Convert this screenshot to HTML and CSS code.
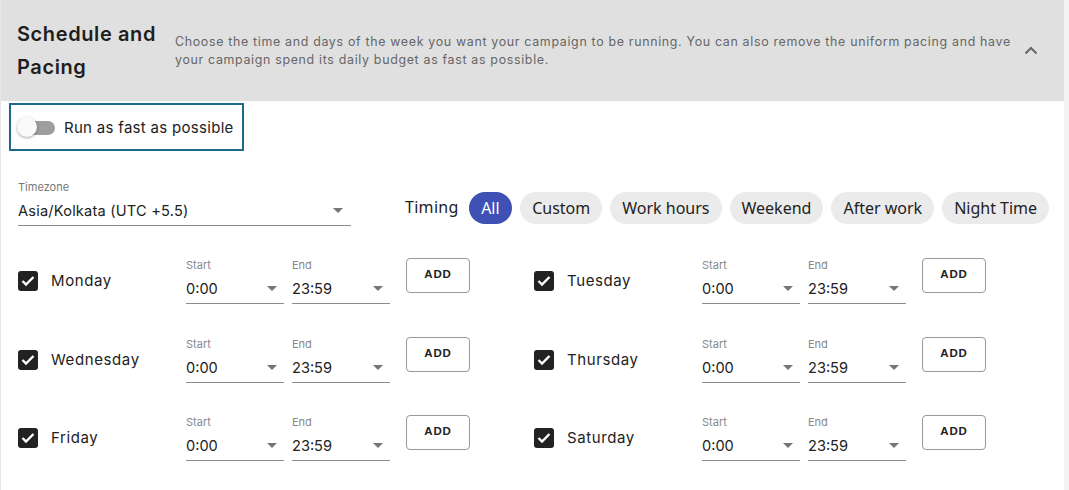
FILE: index.html
```html
<!DOCTYPE html>
<html>
<head>
<meta charset="utf-8">
<link rel="stylesheet" href="styles.css">
</head>
<body>
<div class="card">
  <div class="header">
    <div class="title">Schedule and Pacing</div>
    <div class="desc">Choose the time and days of the week you want your campaign to be running. You can also remove the uniform pacing and have your campaign spend its daily budget as fast as possible.</div>
    <svg class="chev" width="14" height="9" viewBox="0 0 14 9"><path d="M1.5 7.5 L7 2 L12.5 7.5" fill="none" stroke="#666" stroke-width="2"/></svg>
  </div>
  <div class="body">
    <div class="fastbox">
      <span class="switch"><span class="track"></span><span class="knob"></span></span>
      <span class="fastlabel">Run as fast as possible</span>
    </div>
    <div class="toprow">
      <div class="tz">
        <div class="tzlabel">Timezone</div>
        <div class="tzselect"><span>Asia/Kolkata (UTC +5.5)</span><i class="arrow"></i></div>
      </div>
      <div class="timing">
        <span class="timinglabel">Timing</span>
        <span class="chip active">All</span>
        <span class="chip">Custom</span>
        <span class="chip">Work hours</span>
        <span class="chip">Weekend</span>
        <span class="chip">After work</span>
        <span class="chip">Night Time</span>
      </div>
    </div>
    <div class="days">
      <div class="day">
        <span class="cb"><svg width="14" height="12" viewBox="0 0 14 12"><path d="M1.5 6 L5 9.5 L12.5 2" fill="none" stroke="#fff" stroke-width="2.4"/></svg></span>
        <span class="dayname">Monday</span>
        <div class="field"><div class="flabel">Start</div><div class="fval"><span>0:00</span><i class="arrow"></i></div></div>
        <div class="field"><div class="flabel">End</div><div class="fval"><span>23:59</span><i class="arrow"></i></div></div>
        <button class="add">ADD</button>
      </div>
      <div class="day">
        <span class="cb"><svg width="14" height="12" viewBox="0 0 14 12"><path d="M1.5 6 L5 9.5 L12.5 2" fill="none" stroke="#fff" stroke-width="2.4"/></svg></span>
        <span class="dayname">Tuesday</span>
        <div class="field"><div class="flabel">Start</div><div class="fval"><span>0:00</span><i class="arrow"></i></div></div>
        <div class="field"><div class="flabel">End</div><div class="fval"><span>23:59</span><i class="arrow"></i></div></div>
        <button class="add">ADD</button>
      </div>
      <div class="day">
        <span class="cb"><svg width="14" height="12" viewBox="0 0 14 12"><path d="M1.5 6 L5 9.5 L12.5 2" fill="none" stroke="#fff" stroke-width="2.4"/></svg></span>
        <span class="dayname">Wednesday</span>
        <div class="field"><div class="flabel">Start</div><div class="fval"><span>0:00</span><i class="arrow"></i></div></div>
        <div class="field"><div class="flabel">End</div><div class="fval"><span>23:59</span><i class="arrow"></i></div></div>
        <button class="add">ADD</button>
      </div>
      <div class="day">
        <span class="cb"><svg width="14" height="12" viewBox="0 0 14 12"><path d="M1.5 6 L5 9.5 L12.5 2" fill="none" stroke="#fff" stroke-width="2.4"/></svg></span>
        <span class="dayname">Thursday</span>
        <div class="field"><div class="flabel">Start</div><div class="fval"><span>0:00</span><i class="arrow"></i></div></div>
        <div class="field"><div class="flabel">End</div><div class="fval"><span>23:59</span><i class="arrow"></i></div></div>
        <button class="add">ADD</button>
      </div>
      <div class="day">
        <span class="cb"><svg width="14" height="12" viewBox="0 0 14 12"><path d="M1.5 6 L5 9.5 L12.5 2" fill="none" stroke="#fff" stroke-width="2.4"/></svg></span>
        <span class="dayname">Friday</span>
        <div class="field"><div class="flabel">Start</div><div class="fval"><span>0:00</span><i class="arrow"></i></div></div>
        <div class="field"><div class="flabel">End</div><div class="fval"><span>23:59</span><i class="arrow"></i></div></div>
        <button class="add">ADD</button>
      </div>
      <div class="day">
        <span class="cb"><svg width="14" height="12" viewBox="0 0 14 12"><path d="M1.5 6 L5 9.5 L12.5 2" fill="none" stroke="#fff" stroke-width="2.4"/></svg></span>
        <span class="dayname">Saturday</span>
        <div class="field"><div class="flabel">Start</div><div class="fval"><span>0:00</span><i class="arrow"></i></div></div>
        <div class="field"><div class="flabel">End</div><div class="fval"><span>23:59</span><i class="arrow"></i></div></div>
        <button class="add">ADD</button>
      </div>
    </div>
  </div>
</div>
</body>
</html>
```

FILE: styles.css
```css
* { box-sizing: border-box; }
html, body { margin: 0; padding: 0; background: #f4f4f4; }
body {
  font-family: Inter, "Open Sans", sans-serif;
  color: #222;
  width: 1069px;
  height: 490px;
  overflow: hidden;
}
.card {
  width: 1064px;
  height: 490px;
  background: #fff;
  border-left: 1px solid #e6e6e6;
}
.header {
  height: 101px;
  background: #e0e0e0;
  display: flex;
  align-items: center;
  padding: 0 26px 0 16px;
}
.title {
  width: 158px;
  flex: none;
  font-family: Inter, sans-serif;
  font-weight: 600;
  font-size: 20px;
  line-height: 33px;
  letter-spacing: 0.6px;
  color: #1e1e1e;
  padding-top: 1px;
}
.desc {
  flex: 1;
  font-size: 12.4px;
  line-height: 18px;
  color: #666;
  letter-spacing: 0.68px;
  padding-right: 6px;
}
.chev { flex: none; margin-left: 4px; }
.body { padding: 2px 0 0 8px; }
.fastbox {
  width: 235px;
  height: 48px;
  border: 2px solid #1f6a8b;
  display: flex;
  align-items: center;
  padding-left: 5px;
}
.switch {
  position: relative;
  width: 40px;
  height: 20px;
  flex: none;
  display: inline-block;
}
.track {
  position: absolute;
  left: 5px;
  top: 4px;
  width: 34px;
  height: 14px;
  border-radius: 7px;
  background: #9e9e9e;
}
.knob {
  position: absolute;
  left: 1px;
  top: 0;
  width: 20px;
  height: 20px;
  border-radius: 50%;
  background: #fafafa;
  box-shadow: 0 1px 3px rgba(0,0,0,0.35);
}
.fastlabel {
  margin-left: 8px;
  font-size: 15px;
  letter-spacing: 0.3px;
  color: #222;
}
.toprow {
  display: flex;
  align-items: flex-start;
  margin-top: 29px;
  padding-left: 9px;
}
.tz { width: 333px; }
.tzlabel {
  font-size: 11px;
  color: #777;
  line-height: 14px;
}
.tzselect {
  position: relative;
  height: 32px;
  padding-top: 3px;
  border-bottom: 1px solid #8a8a8a;
  font-size: 14.6px;
  line-height: 28px;
  letter-spacing: 0.2px;
  color: #222;
}
.arrow {
  position: absolute;
  right: 8px;
  top: 14px;
  width: 0;
  height: 0;
  border-left: 5.5px solid transparent;
  border-right: 5.5px solid transparent;
  border-top: 5.5px solid #757575;
}
.timing {
  display: flex;
  align-items: center;
  margin-left: 54px;
  margin-top: 12px;
  font-family: "Noto Sans", sans-serif;
}
.timinglabel {
  font-size: 16px;
  letter-spacing: 0.3px;
  color: #222;
  margin-right: 10px;
  margin-top: -2px;
}
.chip {
  height: 32px;
  border-radius: 16px;
  background: #ebebeb;
  font-size: 16px;
  color: #222;
  padding: 0 12px;
  display: flex;
  align-items: center;
  margin-right: 8px;
}
.chip.active {
  background: #3f51b5;
  color: #fff;
  padding: 0 12.5px;
}
.days {
  display: grid;
  grid-template-columns: 516px 516px;
  grid-auto-rows: 78.5px;
  padding-left: 9px;
  margin-top: 30px;
}
.day {
  display: flex;
  align-items: flex-start;
}
.cb {
  width: 20px;
  height: 20px;
  border-radius: 3px;
  background: #222;
  display: flex;
  align-items: center;
  justify-content: center;
  margin-top: 15px;
  flex: none;
}
.dayname {
  width: 135px;
  margin-left: 13px;
  font-size: 15px;
  letter-spacing: 0.6px;
  line-height: 20px;
  margin-top: 15px;
  color: #222;
}
.field {
  width: 98px;
  margin-right: 8px;
  margin-top: 2px;
}
.flabel {
  font-size: 11px;
  color: #888;
  line-height: 14px;
}
.fval {
  position: relative;
  height: 32px;
  padding-top: 3px;
  border-bottom: 1px solid #8a8a8a;
  font-size: 14.6px;
  line-height: 28px;
  color: #222;
}
.fval .arrow { right: 7px; top: 14px; }
.add {
  margin-left: 8px;
  margin-top: 2px;
  width: 64px;
  height: 35px;
  border: 1px solid #999;
  border-radius: 4px;
  background: #fff;
  font-family: "Liberation Sans", Arial, sans-serif;
  font-weight: 700;
  font-size: 11.5px;
  letter-spacing: 0.8px;
  color: #222;
  padding: 0 0 3px;
}
```
